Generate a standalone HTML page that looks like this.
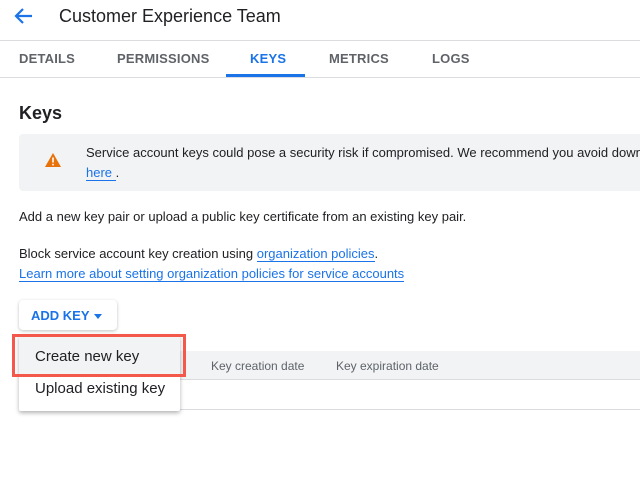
<!DOCTYPE html>
<html><head><style>
*{margin:0;padding:0;box-sizing:border-box}
html,body{width:640px;height:480px;overflow:hidden}
body{background:#fff;font-family:"Liberation Sans",Arial,sans-serif;color:#202124;position:relative}
.a{position:absolute;white-space:nowrap}
.tab{position:absolute;top:51px;font-size:13px;font-weight:bold;color:#5f6368;letter-spacing:.2px}
a{color:#1a73e8;text-decoration:none;border-bottom:1px solid #1a73e8}
</style></head><body>
<svg class="a" style="left:12px;top:7px" width="22" height="18" viewBox="0 0 22 18"><path d="M20 9H4M11 2L4 9l7 7" stroke="#1a73e8" stroke-width="2.2" fill="none"/></svg>
<div class="a" style="left:59px;top:6px;font-size:18px">Customer Experience Team</div>
<div class="a" style="left:0;top:40px;width:640px;height:1px;background:#dadce0"></div>
<div class="tab" style="left:19px">DETAILS</div>
<div class="tab" style="left:117px">PERMISSIONS</div>
<div class="tab" style="left:250px;color:#1a73e8">KEYS</div>
<div class="tab" style="left:329px">METRICS</div>
<div class="tab" style="left:432px">LOGS</div>
<div class="a" style="left:226px;top:74px;width:79px;height:3px;background:#1a73e8"></div>
<div class="a" style="left:0;top:77px;width:640px;height:1px;background:#dadce0"></div>
<div class="a" style="left:19px;top:103px;font-size:18px;font-weight:bold">Keys</div>
<div class="a" style="left:19px;top:134px;width:621px;height:57px;background:#f1f3f4;border-radius:4px 0 0 4px;overflow:hidden">
<svg style="position:absolute;left:26px;top:19px" width="16" height="14" viewBox="0 0 16 14"><path d="M8 0L16 14H0Z" fill="#e8710a"/><rect x="7.2" y="4.5" width="1.6" height="5" fill="#fff"/><rect x="7.2" y="10.8" width="1.6" height="1.6" fill="#fff"/></svg>
<div style="position:absolute;left:67px;top:11px;font-size:13px;white-space:nowrap">Service account keys could pose a security risk if compromised. We recommend you avoid downloading</div>
<div style="position:absolute;left:67px;top:31px;font-size:13px;white-space:nowrap"><a>here </a>.</div>
</div>
<div class="a" style="left:19px;top:209px;font-size:13px">Add a new key pair or upload a public key certificate from an existing key pair.</div>
<div class="a" style="left:19px;top:246px;font-size:13px">Block service account key creation using <a>organization policies</a>.</div>
<div class="a" style="left:19px;top:266px;font-size:13px"><a>Learn more about setting organization policies for service accounts</a></div>
<div class="a" style="left:19px;top:300px;width:98px;height:30px;border-radius:4px;box-shadow:0 1px 3px rgba(0,0,0,.25);font-size:13px;font-weight:bold;color:#1a73e8;padding:8px 0 0 12px">ADD KEY<span style="display:inline-block;margin-left:4px;border:4px solid transparent;border-top:5px solid #1a73e8;vertical-align:-3px"></span></div>
<div class="a" style="left:180px;top:351px;width:460px;height:29px;background:#f1f3f4;border-bottom:1px solid #dadce0"></div>
<div class="a" style="left:211px;top:359px;font-size:12px;color:#5f6368">Key creation date</div>
<div class="a" style="left:336px;top:359px;font-size:12px;color:#5f6368">Key expiration date</div>
<div class="a" style="left:180px;top:409px;width:460px;height:1px;background:#dadce0"></div>
<div class="a" style="left:19px;top:335px;width:161px;height:76px;background:#fff;box-shadow:0 2px 4px rgba(0,0,0,.3);border-radius:2px">
<div style="height:40px;background:#f1f3f4;margin-top:2px;font-size:15px;padding:11px 0 0 16px">Create new key</div>
<div style="font-size:15px;padding:3px 0 0 16px">Upload existing key</div>
</div>
<div class="a" style="left:12px;top:334px;width:174px;height:43px;border:3px solid #f4584a"></div>
</body></html>
